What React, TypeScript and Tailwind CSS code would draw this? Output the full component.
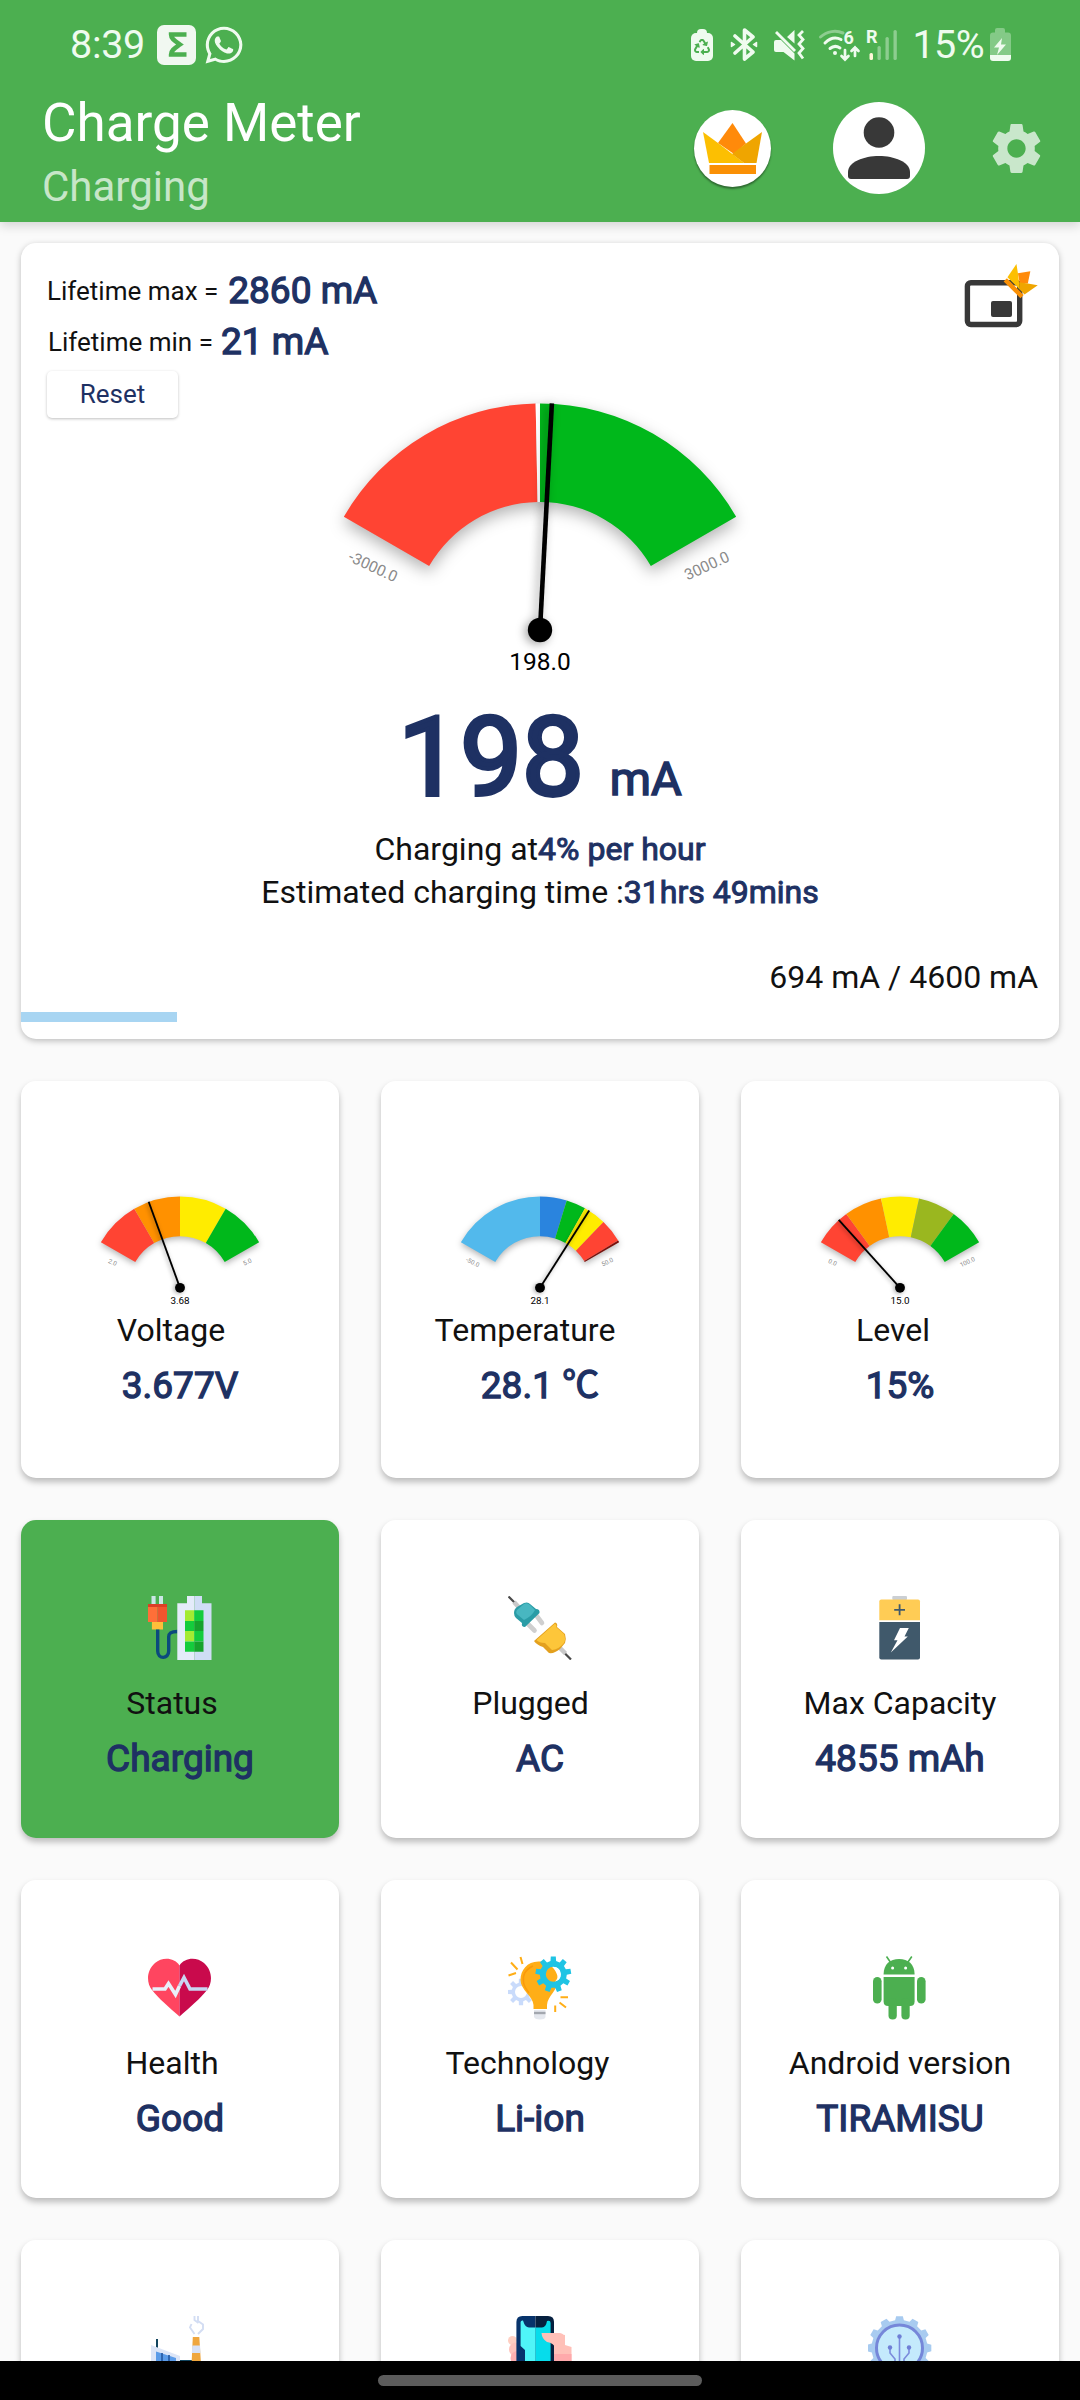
import React from "react";
import { FaRecycle, FaWhatsapp } from "react-icons/fa";
import { MdSettings } from "react-icons/md";

interface Segment {
  from: number;
  to: number;
  color: string;
}

interface GaugeProps {
  segments: Segment[];
  needle: number;
  value: string;
  min: string;
  max: string;
  className: string;
}

interface TileProps {
  label: string;
  value: string;
  labelClass?: string;
  tileClass?: string;
  children: React.ReactNode;
}

// Angles are in degrees, 0 points straight up
const polar = (angle: number, r: number) => {
  const a = (angle * Math.PI) / 180;
  return `${(Math.sin(a) * r).toFixed(2)} ${(-Math.cos(a) * r).toFixed(2)}`;
};

const slicePath = (from: number, to: number, outer = 226.5, inner = 128) =>
  `M${polar(from, outer)}A${outer} ${outer} 0 0 1 ${polar(to, outer)}L${polar(to, inner)}A${inner} ${inner} 0 0 0 ${polar(from, inner)}Z`;

const gearPath = (cx: number, cy: number, outer: number, inner: number, teeth: number, hole: number) => {
  const step = (Math.PI * 2) / teeth;
  const points: string[] = [];
  for (let i = 0; i < teeth; i++) {
    const offsets: [number, number][] = [
      [-0.3, inner],
      [-0.2, outer],
      [0.2, outer],
      [0.3, inner],
    ];
    offsets.forEach(([o, r]) => {
      const a = (i + o) * step;
      points.push(`${(cx + Math.sin(a) * r).toFixed(2)} ${(cy - Math.cos(a) * r).toFixed(2)}`);
    });
  }
  return `M${points.join("L")}ZM${cx - hole} ${cy}a${hole} ${hole} 0 1 0 ${hole * 2} 0a${hole} ${hole} 0 1 0 ${-hole * 2} 0Z`;
};

const Gauge: React.FC<GaugeProps> = ({ segments, needle, value, min, max, className }) => (
  <svg viewBox="-250 -240 500 290" className={className}>
    <g className="[filter:drop-shadow(0_6px_8px_rgba(0,0,0,0.3))]">
      {segments.map((s) => (
        <path key={s.from} d={slicePath(s.from, s.to)} fill={s.color} />
      ))}
    </g>
    <g fill="#8a8a8a" fontSize="15.5" textAnchor="middle">
      <text transform="translate(-167 -63) rotate(25)" y="5">{min}</text>
      <text transform="translate(167 -64) rotate(-25)" y="5">{max}</text>
    </g>
    <g className="[filter:drop-shadow(-3px_2px_5px_rgba(0,0,0,0.35))]">
      <path d={`M0 0L${polar(needle, 227)}`} stroke="#000" strokeWidth="4.6" />
      <circle r="12.2" />
    </g>
    <text y="39.5" fontSize="24.5" textAnchor="middle">{value}</text>
  </svg>
);

const currentSegments: Segment[] = [
  { from: -60, to: -1.1, color: "#FF4433" },
  { from: -1.1, to: 0, color: "#FFFFFF" },
  { from: 0, to: 60, color: "#00B81B" },
];

const voltageSegments: Segment[] = [
  { from: -60, to: -30, color: "#FF4433" },
  { from: -30, to: 0, color: "#FF9100" },
  { from: 0, to: 30, color: "#FFEC00" },
  { from: 30, to: 60, color: "#00B81B" },
];

const temperatureSegments: Segment[] = [
  { from: -60, to: 0, color: "#52B9EC" },
  { from: 0, to: 17, color: "#2A84DE" },
  { from: 17, to: 29.5, color: "#00B81B" },
  { from: 29.5, to: 44, color: "#FFEC00" },
  { from: 44, to: 58.8, color: "#FF4433" },
  { from: 58.8, to: 60, color: "#7A0F0A" },
];

const levelSegments: Segment[] = [
  { from: -60, to: -36, color: "#FF4433" },
  { from: -36, to: -12, color: "#FF9100" },
  { from: -12, to: 12, color: "#FFEC00" },
  { from: 12, to: 36, color: "#9AB71F" },
  { from: 36, to: 60, color: "#00B81B" },
];

const Crown: React.FC = () => (
  <>
    <path d="M29.5 0L43 20.5L31 31L15 20Z" fill="#FF8A0A" />
    <path d="M0 9L15 20L41 40H6Z" fill="#FCBF02" />
    <path d="M59 9L43 20.5L29 31L41 40H53.5Z" fill="#EFA500" />
    <path d="M6.5 42H53V51H6.5Z" fill="#FA9005" />
  </>
);

const StatusBar: React.FC = () => (
  <div className="flex h-[88px] items-center justify-between pl-[70px] pr-[69px] pt-px text-[#EFFBEF]">
    <div className="flex items-center">
      <span className="w-[87px] text-[39.5px] leading-[48px] tracking-[-0.3px]">8:39</span>
      <div className="flex h-10 w-[39px] items-center justify-center rounded-[7px] bg-[#F1F8F1]">
        <svg viewBox="0 0 20 25" className="h-[25px] w-5">
          <path d="M19.500 2.500H4C4 7 8 9 13 12.500C8 16 4 18 4 22.500H19.500" fill="none" stroke="#4CAF50" strokeWidth="4.400" />
        </svg>
      </div>
      <FaWhatsapp className="ml-[7px] size-[42px]" />
    </div>
    <div className="flex items-center">
      <div className="flex h-8 w-[22px] flex-col items-center">
        <div className="h-1 w-2.5 rounded-t-sm bg-[#EFFBEF]" />
        <div className="flex h-7 w-[22px] items-center justify-center rounded-[5px] bg-[#EFFBEF]">
          <FaRecycle className="size-4 text-[#4CAF50]" />
        </div>
      </div>
      <svg viewBox="0 0 28 33" className="ml-[17px] h-[33px] w-7" fill="none" stroke="currentColor" strokeWidth="3.6" strokeLinejoin="round" strokeLinecap="round">
        <path d="M5 8L23 24L14.500 31V2L23 9L5 25" />
        <path d="M1.500 14.500V18.500L4.500 16.500ZM26.500 14.500V18.500L23.500 16.500Z" fill="currentColor" strokeWidth="1.500" />
      </svg>
      <svg viewBox="0 0 31 32" className="ml-4 h-8 w-[31px]">
        <path d="M0 13Q0 11 2 11H7L20.500 24.500V31.500L9.500 23H2Q0 23 0 21ZM20.500 1V14.500L13 8Z" fill="currentColor" />
        <path d="M2 3L21 22" stroke="currentColor" strokeWidth="2.800" />
        <path d="M29 2L25 6L29 10.500L25 15L29 19.500L25 24L29 29.500" fill="none" stroke="currentColor" strokeWidth="2.800" />
      </svg>
      <svg viewBox="0 0 41 33" className="ml-3.5 h-[33px] w-[41px] overflow-visible" fill="none" stroke="currentColor" strokeLinecap="round">
        <path d="M1.500 9C8 3 17 2 24 5" strokeWidth="3" opacity="0.4" />
        <path d="M6 15C11 10 17 9 22 11.500M11 20.500C14 18 18 18 21 20" strokeWidth="3" />
        <circle cx="16" cy="25" r="2" fill="currentColor" stroke="none" />
        <path d="M26 22V31M22.500 28L26 31.500L29.500 28M36 28V19.500M32.500 23L36 19.500L39.500 23" strokeWidth="2.700" />
        <text x="24.500" y="15.500" fontSize="18" fontWeight="700" fill="currentColor" stroke="none">6</text>
      </svg>
      <svg viewBox="0 0 32 33" className="ml-[6px] h-[33px] w-8 overflow-visible">
        <text x="0" y="15" fontSize="18" fontWeight="700" fill="currentColor">R</text>
        <rect x="3.500" y="25" width="3.500" height="7" rx="1.500" fill="#FFF7D8" />
        <g fill="currentColor" opacity="0.4">
          <rect x="11.500" y="18" width="3.300" height="14" rx="1.600" />
          <rect x="19.500" y="9" width="3.300" height="23" rx="1.600" />
          <rect x="27.500" y="2" width="3.300" height="30" rx="1.600" />
        </g>
      </svg>
      <span className="ml-[14px] text-[39.5px] leading-[48px] tracking-[-0.6px]">15%</span>
      <svg viewBox="0 0 21 33" className="ml-[6px] h-[33px] w-[21px]">
        <path d="M5 4.500V2Q5 0 7 0H13Q15 0 15 2V4.500H18Q21 4.500 21 7.500V27H0V7.500Q0 4.500 3 4.500Z" fill="currentColor" opacity="0.35" />
        <path d="M0 27H21V30Q21 33 18 33H3Q0 33 0 30Z" fill="currentColor" />
        <path d="M12 10L4 19.500H9L7 27L16 16.500H11Z" fill="currentColor" />
      </svg>
    </div>
  </div>
);

const Header: React.FC = () => (
  <header className="relative z-10 h-[222px] shrink-0 bg-[#4CAF50] shadow-[0_4px_10px_rgba(0,0,0,0.15)]">
    <StatusBar />
    <div className="flex h-[134px] justify-between pl-[42px] pr-[33px]">
      <div className="pt-[3px]">
        <h1 className="text-[53px] leading-[64px] text-white">Charge Meter</h1>
        <p className="mt-[7px] text-[42px] leading-[50px] text-white/70">Charging</p>
      </div>
      <div className="flex items-center pb-3.5">
        <div className="flex size-[77px] items-center justify-center rounded-full bg-white shadow-[0_2px_2px_rgba(0,0,0,0.4)]">
          <svg viewBox="0 0 59 51" className="h-[51px] w-[59px]">
            <Crown />
          </svg>
        </div>
        <div className="ml-[62px] size-[92px] overflow-hidden rounded-full bg-white">
          <svg viewBox="0 0 92 92" className="size-[92px]" fill="#383838">
            <circle cx="46" cy="30.500" r="15.300" />
            <path d="M15 70C15 60 31 54 46 54S77 60 77 70V74Q77 77 74 77H18Q15 77 15 74Z" />
          </svg>
        </div>
        <MdSettings className="ml-[61px] size-[61px] text-white/70" />
      </div>
    </div>
  </header>
);

const MainCard: React.FC = () => (
  <section className="flex h-[796px] w-full flex-col rounded-[15px] bg-white pt-[25px] shadow-[0_2px_6px_rgba(0,0,0,0.25)]">
    <div className="flex items-start justify-between">
      <div className="pl-[26px]">
        <div className="flex items-center">
          <span className="pb-px text-[26px] leading-[30px]">Lifetime max =</span>
          <span className="ml-2.5 text-[37px] leading-[46px] text-[#1E3163] [-webkit-text-stroke:1.3px_#1E3163]">2860 mA</span>
        </div>
        <div className="mt-[5px] flex items-center pl-px">
          <span className="pb-px text-[26px] leading-[30px]">Lifetime min =</span>
          <span className="ml-2 text-[37px] leading-[46px] text-[#1E3163] [-webkit-text-stroke:1.3px_#1E3163]">21 mA</span>
        </div>
        <button className="mt-[6px] block h-[47px] w-[131px] rounded-[5px] bg-white text-[26px] leading-[47px] text-[#1E3163] shadow-[0_1px_3px_rgba(0,0,0,0.25)]">
          Reset
        </button>
      </div>
      <svg viewBox="0 0 76 66" className="mr-[19px] -mt-[5px] h-[66px] w-[76px]">
        <rect x="3.400" y="19.700" width="52.300" height="41.800" rx="3.500" fill="none" stroke="#383838" strokeWidth="5.400" />
        <rect x="27" y="38" width="21" height="16" rx="2" fill="#383838" />
        <g transform="translate(55.7 -2.3) rotate(45) scale(0.51)">
          <Crown />
        </g>
      </svg>
    </div>
    <Gauge
      segments={currentSegments}
      needle={3}
      value="198.0"
      min="-3000.0"
      max="3000.0"
      className="-mt-[28px] h-[290px] w-[500px] shrink-0 self-center"
    />
    <div className="mt-[10px] flex items-baseline justify-center text-[#1E3163]">
      <span className="text-[110px] leading-[135px] [-webkit-text-stroke:4px_#1E3163]">198</span>
      <span className="ml-[26px] text-[47px] leading-[58px] [-webkit-text-stroke:1.6px_#1E3163]">mA</span>
    </div>
    <p className="mt-[5px] text-center text-[32px] leading-[38px]">
      Charging at
      <span className="text-[#1E3163] [-webkit-text-stroke:1px_#1E3163]">4% per hour</span>
    </p>
    <p className="mt-[5px] text-center text-[32px] leading-[38px]">
      Estimated charging time :
      <span className="text-[#1E3163] [-webkit-text-stroke:1px_#1E3163]">31hrs 49mins</span>
    </p>
    <p className="mt-[47px] pr-[21px] text-right text-[32px] leading-[38px]">694 mA / 4600 mA</p>
    <div className="mt-4 h-2.5 w-[156px] shrink-0 bg-[#A8D5F2]" />
  </section>
);

const Tile: React.FC<TileProps> = ({
  label,
  value,
  labelClass = "",
  tileClass = "h-[318px] bg-white pt-[76px]",
  children,
}) => (
  <div className={`flex w-[318px] flex-col items-center rounded-[15px] shadow-[0_4px_6px_rgba(0,0,0,0.25)] ${tileClass}`}>
    {children}
    <span className={`text-[32px] leading-[38px] ${labelClass}`}>{label}</span>
    <span className="mt-3.5 text-[37px] leading-[46px] text-[#1E3163] [-webkit-text-stroke:1.3px_#1E3163]">{value}</span>
  </div>
);

const Icon: React.FC<{ children: React.ReactNode }> = ({ children }) => (
  <svg viewBox="0 0 64 64" className="mb-6 size-16 shrink-0">
    {children}
  </svg>
);

const ChargingIcon = () => (
  <Icon>
    <path d="M3.500 0H7.600V8H3.500ZM11 0H15V8H11Z" fill="#CBE6E6" />
    <path d="M0 8H9.500V26H0Z" fill="#FF6F38" />
    <path d="M9.500 8H19V26H9.500Z" fill="#F0552E" />
    <path d="M0 8H19V11H0Z" fill="#DC3F26" />
    <path d="M3.900 26H15V33.500H3.900Z" fill="#FDBF3A" />
    <path d="M9.700 33.500V55C9.700 63.500 20.700 63.500 20.700 55V41C20.700 37 23 35.500 29.500 35.500" fill="none" stroke="#0B4A7D" strokeWidth="3.400" />
    <path d="M29.300 7.300H39V0H46.500V64H29.300Z" fill="#E4ECFA" />
    <path d="M46.500 0H54V7.300H63.500V64H46.500Z" fill="#CFDDF5" />
    <path d="M37 14.300H46.200V25H37ZM37 35H46.200V45.500H37Z" fill="#A4EB32" />
    <path d="M46.200 14.300H55.500V25H46.200ZM46.200 35H55.500V45.500H46.200ZM37 25H46.200V35H37ZM37 45.500H46.200V55.700H37Z" fill="#14CC3C" />
    <path d="M46.200 25H55.500V35H46.200ZM46.200 45.500H55.500V55.700H46.200Z" fill="#16A32C" />
  </Icon>
);

const PluggedIcon = () => (
  <Icon>
    <path d="M0.500 0.500L6.500 6.500M57 57.500L63 63.500" stroke="#4A4A4A" strokeWidth="2.200" />
    <path d="M6 6L11 11.500M52 52L57.500 57.500" stroke="#C9C9C9" strokeWidth="4.500" />
    <path d="M28 19L34 27M20 28L26.500 34.500" stroke="#CFCFCF" strokeWidth="4.600" strokeLinecap="round" />
    <path d="M6 17Q6 13 9 11L16 7Q20 5.500 22 8L28 13Q32 13 31.500 17L17 31Q13 31 14 27L8 22Q6 20 6 17Z" fill="#2A9CA6" />
    <path d="M9 14L16 8Q19 6 22 9L27 14Q24 20 16 24L10 19Q7 17 9 14Z" fill="#48B7C1" />
    <path d="M47 26.500Q50 27 49 31L57 38Q58.500 43 57 47L52 53Q46 58 41 57L35 51Q29 49 26 45Z" fill="#E3A01E" />
    <path d="M47 27.500Q49 29 48.500 31.500L56 38Q58 43 56 47Q50 54 44 54L37 47Q31 47 28.500 44Z" fill="#FDC63A" />
  </Icon>
);

const CapacityIcon = () => (
  <Icon>
    <rect x="24.300" y="0" width="14.700" height="4" rx="1" fill="#CBCFD3" />
    <path d="M11.300 24.300V5.500Q11.300 3.500 13.300 3.500H50Q52 3.500 52 5.500V24.300Z" fill="#FFCC55" />
    <path d="M11.300 26H52V61.500Q52 63.500 50 63.500H13.300Q11.300 63.500 11.300 61.500Z" fill="#40596B" />
    <path d="M31.600 8.300V19.300M26.200 13.800H37" stroke="#40596B" strokeWidth="1.800" />
    <path d="M32 32H40.800L36.500 40.500H39.800L22.800 56.500L29.500 44.200H26Z" fill="#fff" />
  </Icon>
);

const HealthIcon = () => (
  <Icon>
    <path d="M31.500 9.500C26 1 14 1 7 7C-2 15-1.500 27 4 34C10 42 22 52 31.500 60.500Z" fill="#FF4560" />
    <path d="M31.500 9.500C37 1 49 1 56 7C65 15 64.500 27 59 34C53 42 41 52 31.500 60.500Z" fill="#C90A4C" />
    <path d="M4.500 33H17L20.500 27.500L27.500 38.500L31.500 30" fill="none" stroke="#E9F0FA" strokeWidth="3.600" />
    <path d="M31.500 30L36 21.500L42 33H59.500" fill="none" stroke="#C9D6F2" strokeWidth="3.600" />
  </Icon>
);

const TechnologyIcon = () => (
  <Icon>
    <path d={gearPath(13, 36, 13.5, 9.5, 8, 6)} fill="#C9DBFB" fillRule="evenodd" />
    <path d="M30.500 5.500C19 5.500 12.500 14.500 12.500 24C12.500 34 25 40 25.500 49V53H39V49C39.500 40 50 34 50 24C50 14 41 5.500 30.500 5.500Z" fill="#FFAE17" />
    <path d="M25 10C18 13 14.500 19 15.500 26C16 31 19 34 21 37" fill="none" stroke="#FA9A0A" strokeWidth="1.500" />
    <path d={gearPath(45.3, 18.3, 18, 13.5, 9, 7.5)} fill="#1FC4E4" fillRule="evenodd" />
    <path d="M46.500 10.900A7.500 7.500 0 0 1 47 25.600Q50.500 22 50 17Q49 13 46.500 10.900Z" fill="#fff" />
    <path d="M26 54H37.500V61Q37 63.500 32 63.500T26 61Z" fill="#E5E8EE" />
    <path d="M26 57H37.500" stroke="#A3A7AE" strokeWidth="2.400" />
    <path d="M3 6.500L9.500 13.500M12.500 1L14.500 8M0.500 19.500L8 17M52.500 41.200H60M51.500 46.500L58 51.500M47.200 49.500V56" stroke="#FFAE17" strokeWidth="2" />
  </Icon>
);

const AndroidIcon = () => (
  <Icon>
    <g fill="#4CAF50">
      <path d="M15.600 18.500C15.600 8 22 3 31.100 3S46.600 8 46.600 18.500Z" />
      <path d="M15.600 21H46.600V45.500Q46.600 50 42 50H20.200Q15.600 50 15.600 45.500Z" />
      <rect x="5" y="21" width="8.600" height="26.500" rx="4.300" />
      <rect x="49" y="21" width="8.600" height="26.500" rx="4.300" />
      <rect x="20.500" y="42" width="8.300" height="21.500" rx="4" />
      <rect x="33.400" y="42" width="8.300" height="21.500" rx="4" />
    </g>
    <path d="M18.500 0.500L23 7M43.800 0.500L39.300 7" stroke="#4CAF50" strokeWidth="1.600" />
    <circle cx="24.600" cy="12" r="1.500" fill="#fff" />
    <circle cx="37.600" cy="12" r="1.500" fill="#fff" />
  </Icon>
);

const FactoryIcon = () => (
  <Icon>
    <path d="M46.500 0V4L50.500 7M43.500 8L42 11.500L46.500 18M50 0V5L55 8.500V13L50 18" fill="none" stroke="#D3DDF3" strokeWidth="1.900" />
    <path d="M9 23V33" stroke="#12455F" strokeWidth="2" />
    <path d="M3 29L32 40V64H3Z" fill="#DCE5F7" />
    <path d="M8 35.500L28 42V64H8Z" fill="#5B9BE8" />
    <path d="M14 37V64M21 39V64" stroke="#2B5FA8" strokeWidth="1.800" />
    <path d="M32 44H44V64H32Z" fill="#12455F" />
    <path d="M44.800 21H51.300L54 64H42.800Z" fill="#EFA63E" />
    <path d="M44.300 29.500H52L52.500 37H43.800Z" fill="#D7E1F6" />
  </Icon>
);

const PhoneIcon = () => (
  <Icon>
    <circle cx="4.500" cy="24.500" r="4.500" fill="#FFCFC2" />
    <circle cx="8" cy="33.500" r="7" fill="#FFC3BC" />
    <circle cx="9.500" cy="42" r="7" fill="#FFAFB0" />
    <path d="M46 17L57 19V29L63.500 31V64H44Z" fill="#FFC0B8" />
    <path d="M44 38H63.500V64H44Z" fill="#FFA9AB" />
    <path d="M8.400 64V6Q8.400 0 14.400 0H27.500V64Z" fill="#07336B" />
    <path d="M27.500 0H40Q46 0 46 6V64H27.500Z" fill="#06203F" />
    <path d="M12.600 30V6Q13 4 15 4.500Q17 11.500 21 11.500H27.500V64H17V34Z" fill="#4FF5F8" />
    <path d="M27.500 11.500H34Q38 11 39 5Q42.600 4 42.600 7V64H27.500Z" fill="#06DCEB" />
    <path d="M33.500 17H52Q57 18 57 24V29L48 33Q46 27 39 26Q34 23 33.500 17Z" fill="#FFC0B8" />
  </Icon>
);

const ProcessorIcon = () => (
  <Icon>
    <path d={gearPath(31.5, 32, 32, 28, 12, 20)} fill="#A8CBF0" fillRule="evenodd" />
    <circle cx="31.500" cy="32" r="23" fill="#C4EAFC" stroke="#7687D9" strokeWidth="3" />
    <g fill="none" stroke="#7B8BDC" strokeWidth="1.600">
      <path d="M31.500 20V60M22 31V37L27 43V60M41 31V37L36 43V60" />
    </g>
    <g fill="#6E7FD6">
      <circle cx="31.500" cy="20.500" r="2.200" />
      <circle cx="22" cy="31.500" r="2.200" />
      <circle cx="41" cy="31.500" r="2.200" />
    </g>
  </Icon>
);

const App: React.FC = () => {
  const gaugeTile = "h-[397px] bg-white pt-[110px]";
  const gaugeSize = "mb-[3px] h-[117px] w-[202px] shrink-0";

  return (
    <div className="flex h-[2400px] w-[1080px] flex-col overflow-hidden bg-[#FAFAFA] font-[Roboto,'Noto_Sans_CJK_SC',sans-serif] text-[#111111]">
      <Header />

      <main className="min-h-0 flex-1 overflow-hidden px-[21px] pt-[21px]">
        <MainCard />

        <div className="mt-[42px] grid grid-cols-3 gap-[42px]">
          <Tile label="Voltage" value="3.677V" labelClass="pr-[18px]" tileClass={gaugeTile}>
            <Gauge segments={voltageSegments} needle={-20} value="3.68" min="2.0" max="5.0" className={gaugeSize} />
          </Tile>
          <Tile label="Temperature" value="28.1 ℃" labelClass="pr-[30px]" tileClass={gaugeTile}>
            <Gauge segments={temperatureSegments} needle={32.5} value="28.1" min="-50.0" max="50.0" className={gaugeSize} />
          </Tile>
          <Tile label="Level" value="15%" labelClass="pr-[14px]" tileClass={gaugeTile}>
            <Gauge segments={levelSegments} needle={-42} value="15.0" min="0.0" max="100.0" className={gaugeSize} />
          </Tile>

          <Tile label="Status" value="Charging" labelClass="pr-[16px]" tileClass="h-[318px] bg-[#4CAF50] pt-[76px]">
            <ChargingIcon />
          </Tile>
          <Tile label="Plugged" value="AC" labelClass="pr-[19px]">
            <PluggedIcon />
          </Tile>
          <Tile label="Max Capacity" value="4855 mAh">
            <CapacityIcon />
          </Tile>

          <Tile label="Health" value="Good" labelClass="pr-[16px]">
            <HealthIcon />
          </Tile>
          <Tile label="Technology" value="Li-ion" labelClass="pr-[25px]">
            <TechnologyIcon />
          </Tile>
          <Tile label="Android version" value="TIRAMISU">
            <AndroidIcon />
          </Tile>

          <Tile label="" value="">
            <FactoryIcon />
          </Tile>
          <Tile label="" value="">
            <PhoneIcon />
          </Tile>
          <Tile label="" value="">
            <ProcessorIcon />
          </Tile>
        </div>
      </main>

      {/* Gesture navigation bar */}
      <div className="z-10 flex h-[39px] shrink-0 justify-center bg-black pt-3.5">
        <div className="h-[11px] w-[324px] rounded-full bg-[#5C5C5C]" />
      </div>
    </div>
  );
};

export default App;
